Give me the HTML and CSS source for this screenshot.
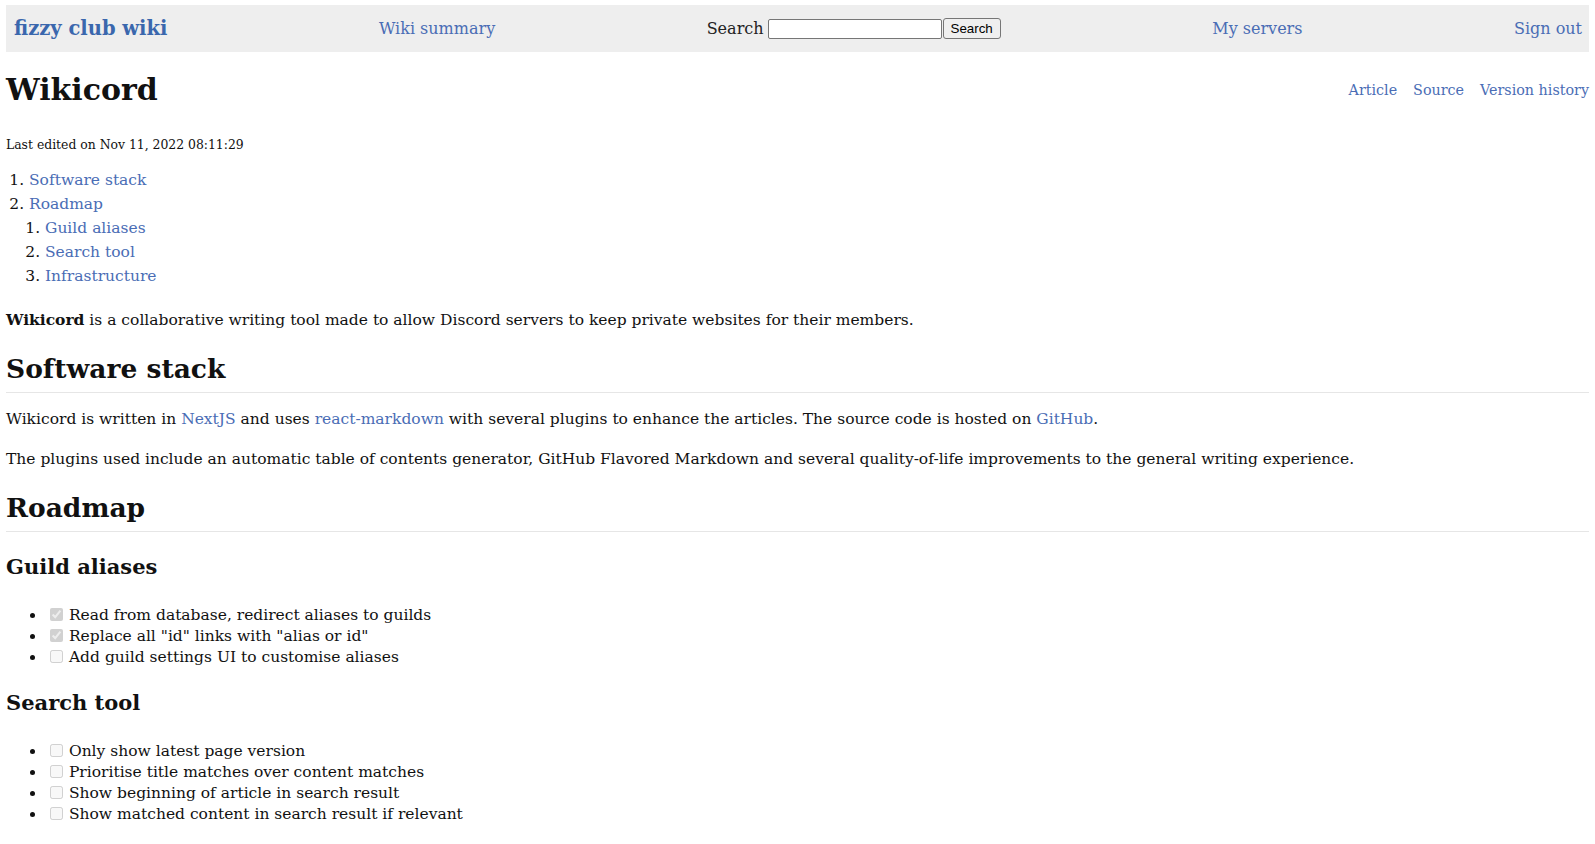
FILE: index.html
```html
<!DOCTYPE html>
<html lang="en">
<head>
<meta charset="utf-8">
<title>Wikicord - fizzy club wiki</title>
<link rel="stylesheet" href="styles.css">
</head>
<body>
<nav class="topbar">
  <a class="logo" href="#">fizzy club wiki</a>
  <a class="navlink" href="#">Wiki summary</a>
  <form class="search">
    <label class="search-label" for="q">Search</label>
    <input class="search-input" id="q" type="text">
    <button class="search-btn" type="button">Search</button>
  </form>
  <a class="navlink" href="#">My servers</a>
  <a class="navlink" href="#">Sign out</a>
</nav>
<main class="page">
  <div class="title-row">
    <h1 class="title">Wikicord</h1>
    <div class="page-tabs">
      <a href="#">Article</a>
      <a href="#">Source</a>
      <a href="#">Version history</a>
    </div>
  </div>
  <p class="edited">Last edited on Nov 11, 2022 08:11:29</p>
  <ol class="toc">
    <li><a href="#">Software stack</a></li>
    <li><a href="#">Roadmap</a>
      <ol class="toc sub">
        <li><a href="#">Guild aliases</a></li>
        <li><a href="#">Search tool</a></li>
        <li><a href="#">Infrastructure</a></li>
      </ol>
    </li>
  </ol>
  <p class="para"><strong>Wikicord</strong> is a collaborative writing tool made to allow Discord servers to keep private websites for their members.</p>
  <h2 class="h2">Software stack</h2>
  <p class="para">Wikicord is written in <a href="#">NextJS</a> and uses <a href="#">react-markdown</a> with several plugins to enhance the articles. The source code is hosted on <a href="#">GitHub</a>.</p>
  <p class="para">The plugins used include an automatic table of contents generator, GitHub Flavored Markdown and several quality-of-life improvements to the general writing experience.</p>
  <h2 class="h2">Roadmap</h2>
  <h3 class="h3">Guild aliases</h3>
  <ul class="tasks">
    <li><input type="checkbox" checked disabled> Read from database, redirect aliases to guilds</li>
    <li><input type="checkbox" checked disabled> Replace all "id" links with "alias or id"</li>
    <li><input type="checkbox" disabled> Add guild settings UI to customise aliases</li>
  </ul>
  <h3 class="h3">Search tool</h3>
  <ul class="tasks">
    <li><input type="checkbox" disabled> Only show latest page version</li>
    <li><input type="checkbox" disabled> Prioritise title matches over content matches</li>
    <li><input type="checkbox" disabled> Show beginning of article in search result</li>
    <li><input type="checkbox" disabled> Show matched content in search result if relevant</li>
  </ul>
</main>
</body>
</html>
```
FILE: styles.css
```css
html, body {
  margin: 0;
  padding: 0;
  background: #fff;
}
body {
  padding: 5px 6px;
  font-family: "DejaVu Serif", serif;
  font-size: 15.5px;
  color: #111;
}
a {
  color: #4a6db5;
  text-decoration: none;
}
.topbar {
  display: flex;
  justify-content: space-between;
  align-items: center;
  height: 47px;
  padding: 0 7px 0 8px;
  background: #eee;
}
.logo {
  font-weight: bold;
  font-size: 19.5px;
  color: #3a67ad;
}
.navlink {
  font-size: 16px;
}
.search {
  display: flex;
  align-items: center;
  margin: 0;
}
.search-label {
  font-size: 16px;
  color: #222;
  margin-right: 4px;
}
.search-input {
  box-sizing: border-box;
  width: 174px;
  height: 20px;
  margin: 0;
  border: 1px solid #767676;
  border-radius: 2px;
  padding: 1px 2px;
  background: #fff;
}
.search-btn {
  box-sizing: border-box;
  height: 21px;
  margin: 0 0 0 1px;
  padding: 0 7px;
  font-family: "Liberation Sans", Arial, sans-serif;
  font-size: 13.33px;
  color: #000;
  background: #efefef;
  border: 1px solid #767676;
  border-radius: 3px;
}
.title-row {
  display: flex;
  justify-content: space-between;
  align-items: center;
  margin-top: 17px;
}
.title {
  margin: 0;
  font-size: 30px;
  line-height: 42px;
  font-weight: bold;
}
.page-tabs {
  display: flex;
  gap: 16px;
  font-size: 14.3px;
}
.edited {
  margin: 25px 0 0;
  font-size: 12.4px;
  line-height: 18px;
}
.toc {
  margin: 14px 0 0;
  padding-left: 23px;
  line-height: 24px;
}
.toc.sub {
  margin: 0;
  padding-left: 16px;
}
.para {
  margin: 22px 0 0;
  line-height: 20px;
}
.para + .para {
  margin-top: 20px;
}
.h2 {
  margin: 21px 0 0;
  font-size: 26.5px;
  line-height: 36px;
  padding-bottom: 5px;
  border-bottom: 1px solid #e6e6e6;
}
.h2 + .para {
  margin-top: 16px;
}
.h3 {
  margin: 20px 0 0;
  font-size: 21px;
  line-height: 30px;
}
.tasks {
  margin: 23px 0 0;
  padding-left: 40px;
  line-height: 21px;
}
.tasks input {
  margin: 0 1px 0 4px;
  width: 13px;
  height: 13px;
  vertical-align: -1px;
}
```
